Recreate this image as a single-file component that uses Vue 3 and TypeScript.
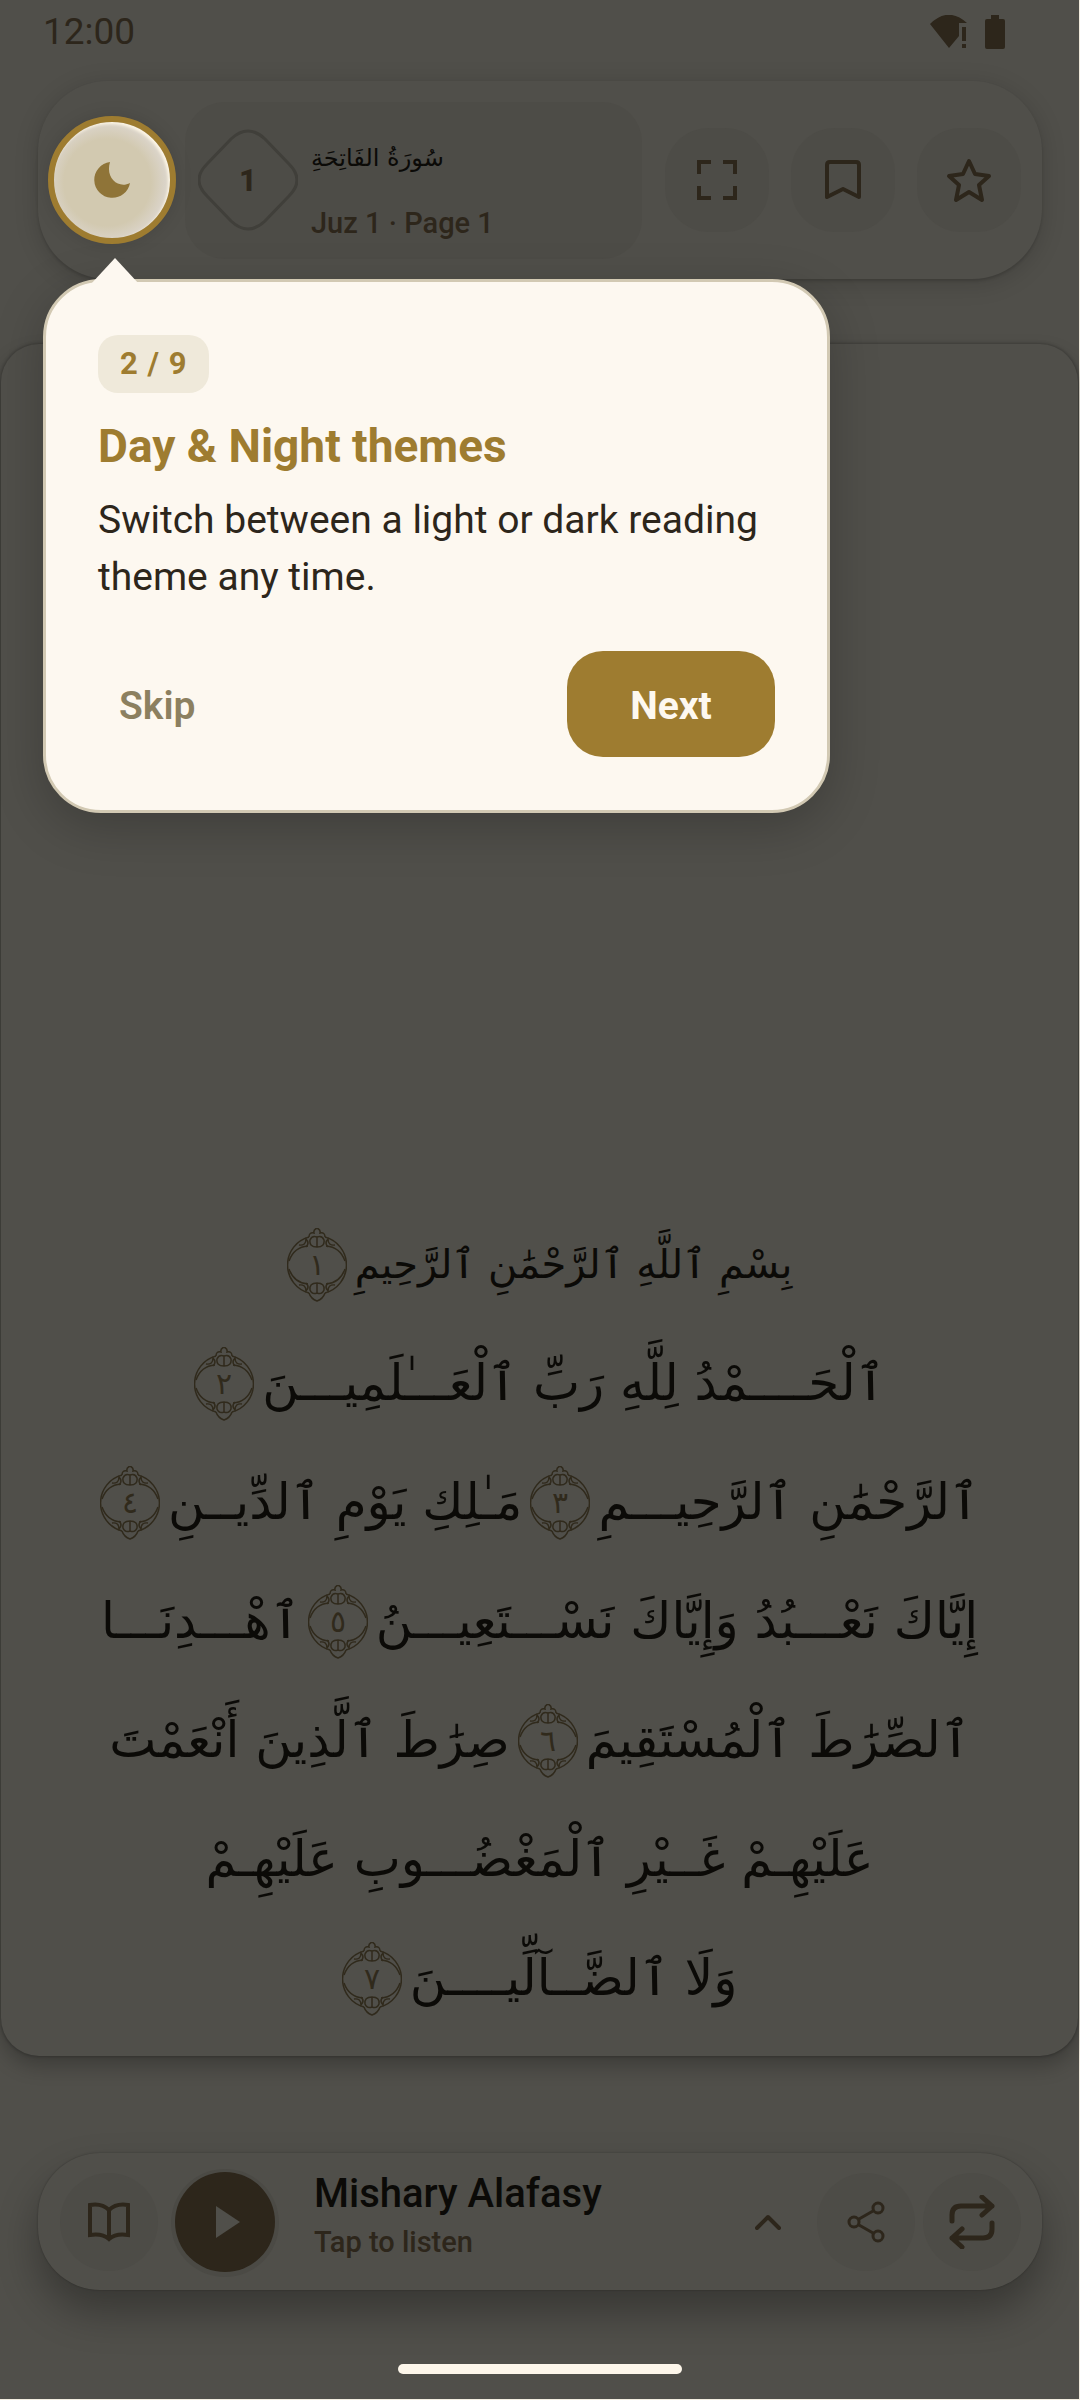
<script setup lang="ts">
import { ref } from 'vue'

interface Part {
  text?: string
  ayah?: string
}

const lines: Part[][] = [
  [{ text: 'بِسْمِ ٱللَّهِ ٱلرَّحْمَٰنِ ٱلرَّحِيمِ' }, { ayah: '١' }],
  [{ text: 'ٱلْحَــــمْدُ لِلَّهِ رَبِّ ٱلْعَـــٰلَمِيـــنَ' }, { ayah: '٢' }],
  [{ text: 'ٱلرَّحْمَٰنِ ٱلرَّحِيـــمِ' }, { ayah: '٣' }, { text: 'مَـٰلِكِ يَوْمِ ٱلدِّيــنِ' }, { ayah: '٤' }],
  [{ text: 'إِيَّاكَ نَعْـــبُدُ وَإِيَّاكَ نَسْـــتَعِيـــنُ' }, { ayah: '٥' }, { text: 'ٱهْـــدِنَـــا' }],
  [{ text: 'ٱلصِّرَٰطَ ٱلْمُسْتَقِيمَ' }, { ayah: '٦' }, { text: 'صِرَٰطَ ٱلَّذِينَ أَنْعَمْتَ' }],
  [{ text: 'عَلَيْهِـمْ غَــيْرِ ٱلْمَغْضُـــوبِ عَلَيْهِـمْ' }],
  [{ text: 'وَلَا ٱلضَّــآلِّيــــنَ' }, { ayah: '٧' }],
]

const step = ref(2)
const total = 9
const open = ref(true)
const next = () => {
  if (step.value < total) step.value++
  else open.value = false
}
</script>

<template>
  <div class="app">
    <div class="status">
      <span>12:00</span>
      <span class="status-icons">
        <svg width="38" height="34" viewBox="0 0 38 34" aria-hidden="true">
          <path d="M0 9Q18-9 37 8H29V21L19 33Z" fill="currentColor" />
          <path d="M32 12h4v14h-4zM32 29h4v4h-4z" fill="currentColor" />
        </svg>
        <svg width="20" height="34" viewBox="0 0 20 34" aria-hidden="true">
          <path d="M6 0h8v4h4q2 0 2 2v26q0 2-2 2H2q-2 0-2-2V6q0-2 2-2h4z" fill="currentColor" />
        </svg>
      </span>
    </div>

    <header class="toolbar">
      <div class="spotlight">
        <button class="theme" aria-label="Theme">
          <svg width="36" height="36" viewBox="0 0 36 36"><path d="M16 0A18 18 0 1 0 36 21C25 27 11 17 16 0Z" fill="#8f7438" /></svg>
        </button>
        <section v-if="open" class="tip" role="dialog" aria-labelledby="tip-title">
          <span class="count">{{ step }} / {{ total }}</span>
          <h2 id="tip-title">Day &amp; Night themes</h2>
          <p>Switch between a light or dark reading theme any time.</p>
          <div class="tip-actions">
            <button class="skip" @click="open = false">Skip</button>
            <button class="next" @click="next">Next</button>
          </div>
        </section>
      </div>
      <button class="surah">
        <span class="number">
          <svg width="100" height="102" viewBox="0 0 100 102" aria-hidden="true">
            <path d="M33 10Q50-6 67 10L91 35Q107 51 91 67L67 92Q50 108 33 92L9 67Q-7 51 9 35Z" fill="none" stroke="#403f3a" stroke-width="3" />
          </svg>
          <b>1</b>
        </span>
        <span class="surah-text">
          <span class="surah-name" lang="ar" dir="rtl">سُورَةُ الفَاتِحَةِ</span>
          <span class="surah-meta">Juz 1 · Page 1</span>
        </span>
      </button>
      <div class="tools">
        <button class="tool" aria-label="Full screen">
          <svg width="40" height="40" viewBox="0 0 40 40"><path d="M2 14V2h12M26 2h12v12M38 26v12H26M14 38H2V26" fill="none" stroke="currentColor" stroke-width="4" /></svg>
        </button>
        <button class="tool" aria-label="Bookmark">
          <svg width="36" height="40" viewBox="0 0 36 40"><path d="M2 37V5q0-3 3-3h26q3 0 3 3v32L18 29Z" fill="none" stroke="currentColor" stroke-width="4" stroke-linejoin="round" /></svg>
        </button>
        <button class="tool" aria-label="Favourite">
          <svg width="46" height="46" viewBox="0 0 46 46"><path d="M23 4l6 13 14 2-10 9 3 15-13-8-13 8 3-15L3 19l14-2z" fill="none" stroke="currentColor" stroke-width="4" stroke-linejoin="round" /></svg>
        </button>
      </div>
    </header>

    <main class="page" lang="ar" dir="rtl">
      <div v-for="(line, i) in lines" :key="i" class="line" :class="{ opening: i === 0 }">
        <template v-for="(part, j) in line" :key="j">
          <span v-if="part.text">{{ part.text }}</span>
          <svg v-else class="ayah" width="60" height="74" viewBox="0 0 60 74">
            <g fill="none" stroke="currentColor" stroke-width="1.5">
              <path d="M22 9A29 29 0 0 0 22 65M38 9A29 29 0 0 1 38 65" />
              <path d="M2 33Q7 19 21 18M39 18Q53 19 58 33M2 41Q7 55 21 56M39 56Q53 55 58 41" />
              <path d="M22 9Q22 4 27 5 26 2 30 0 34 2 33 5 38 4 38 9M30 9V19Q22 19 23 12 25 7 30 9 35 7 37 12 38 19 30 19M12 17Q19 18 19 11 23 15 19 19M48 17Q41 18 41 11 37 15 41 19" />
              <path d="M22 65Q24 71 30 73 36 71 38 65M30 65V55Q22 55 23 62 25 67 30 65 35 67 37 62 38 55 30 55M12 57Q19 56 19 63 23 59 19 55M48 57Q41 56 41 63 37 59 41 55" />
            </g>
            <text x="30" y="47" text-anchor="middle" fill="currentColor">{{ part.ayah }}</text>
          </svg>
        </template>
      </div>
    </main>

    <footer class="player">
      <button class="round" aria-label="Read">
        <svg width="42" height="40" viewBox="0 0 42 40"><path d="M2 3Q14 1 21 8 28 1 40 3V33Q28 31 21 37 14 31 2 33ZM21 8V37" fill="none" stroke="currentColor" stroke-width="4" /></svg>
      </button>
      <button class="play" aria-label="Play">
        <svg width="24" height="32" viewBox="0 0 24 32"><path d="M0 0L24 16 0 32Z" fill="#504f4a" /></svg>
      </button>
      <div class="reciter">
        <strong>Mishary Alafasy</strong>
        <span>Tap to listen</span>
      </div>
      <button class="expand" aria-label="Choose reciter">
        <svg width="26" height="16" viewBox="0 0 26 16"><path d="M2 14L13 3 24 14" fill="none" stroke="currentColor" stroke-width="4" stroke-linecap="round" stroke-linejoin="round" /></svg>
      </button>
      <button class="round" aria-label="Share">
        <svg width="38" height="42" viewBox="0 0 38 42"><g fill="none" stroke="currentColor" stroke-width="3"><circle cx="7" cy="21" r="5" /><circle cx="31" cy="7" r="5" /><circle cx="31" cy="35" r="5" /><path d="M12 18L26 10M12 24L26 32" /></g></svg>
      </button>
      <button class="round" aria-label="Repeat">
        <svg width="46" height="54" viewBox="0 0 46 54"><path d="M3 26V20Q3 11 12 11H43M33 2L43 11 33 20M43 28V34Q43 43 34 43H3M13 34L3 43 13 52" fill="none" stroke="currentColor" stroke-width="5" stroke-linecap="round" stroke-linejoin="round" /></svg>
      </button>
    </footer>

    <div class="home"></div>
  </div>
</template>

<style>
body {
  background: #f3eddf;
}
</style>

<style scoped>
.app {
  --ink: #2d261b;
  --bg: #504f4a;
  --soft: #4d4c47;
  --gold: #9e7c30;
  --cream: #fdf8f0;
  box-sizing: border-box;
  min-height: calc(100vh - 1px);
  margin-right: 1px;
  padding-bottom: 25px;
  display: flex;
  flex-direction: column;
  background: var(--bg);
  color: var(--ink);
  font-family: Roboto, "Noto Sans", sans-serif;
}
button {
  margin: 0;
  padding: 0;
  border: 0;
  background: none;
  color: inherit;
  font: inherit;
  display: flex;
  align-items: center;
  justify-content: center;
}
svg {
  display: block;
  flex: none;
}
.status {
  height: 81px;
  padding: 0 74px 18px 43px;
  box-sizing: border-box;
  display: flex;
  align-items: center;
  justify-content: space-between;
  font-size: 37px;
}
.status-icons {
  display: flex;
  gap: 17px;
}
.toolbar {
  margin: 0 37px 0 38px;
  height: 198px;
  padding: 0 21px 0 10px;
  box-sizing: border-box;
  display: flex;
  align-items: center;
  border-radius: 70px;
  box-shadow: 0 2px 3px rgba(0, 0, 0, 0.15), 0 4px 24px rgba(0, 0, 0, 0.16);
}
.spotlight {
  position: relative;
  z-index: 2;
}
.theme {
  width: 128px;
  height: 128px;
  box-sizing: border-box;
  border: 6px solid var(--gold);
  border-radius: 50%;
  background: radial-gradient(circle at 46% 52%, #d2c9b0 50%, #dad3c7 66%);
  box-shadow: inset -2px 2px 3px #fdf6e6, 0 0 18px rgba(0, 0, 0, 0.12);
}
.tip {
  position: absolute;
  top: 163px;
  left: -5px;
  width: 787px;
  box-sizing: border-box;
  padding: 53px 52px;
  border: 3px solid #d2c9b3;
  border-radius: 58px;
  background: var(--cream);
  box-shadow: 0 14px 50px rgba(0, 0, 0, 0.22);
}
.tip::before {
  content: "";
  position: absolute;
  left: 45px;
  top: -24px;
  width: 48px;
  height: 26px;
  background: var(--cream);
  clip-path: polygon(50% 0, 100% 100%, 0 100%);
}
.count {
  display: inline-block;
  padding: 0 22px;
  border-radius: 20px;
  background: #efe9da;
  color: var(--gold);
  font-size: 31px;
  line-height: 58px;
  font-weight: 700;
  letter-spacing: 1px;
}
.tip h2 {
  margin: 26px 0 0;
  color: var(--gold);
  font-size: 46px;
  line-height: 54px;
  font-weight: 700;
}
.tip p {
  margin: 19px 0 0;
  font-size: 39px;
  line-height: 57px;
}
.tip-actions {
  margin-top: 45px;
  display: flex;
  justify-content: space-between;
  font-size: 39px;
}
.skip,
.next {
  padding: 4px 21px 0;
}
.skip {
  color: #8c8060;
  font-weight: 600;
}
.next {
  width: 208px;
  height: 106px;
  box-sizing: border-box;
  border-radius: 36px;
  background: var(--gold);
  color: var(--cream);
  font-weight: 700;
}
.surah {
  flex: 1;
  min-width: 0;
  height: 157px;
  margin: 0 23px 0 9px;
  padding-left: 13px;
  justify-content: flex-start;
  border-radius: 40px;
  background: var(--soft);
}
.number {
  display: grid;
  place-items: center;
}
.number > * {
  grid-area: 1 / 1;
}
.number b {
  font-size: 31px;
  font-weight: 800;
}
.surah-text {
  margin-left: 13px;
  padding-top: 8px;
  display: flex;
  flex-direction: column;
  align-items: flex-start;
  gap: 12px;
}
.surah-name {
  color: #0b0a07;
  font-family: "DejaVu Sans", sans-serif;
  font-size: 24px;
  line-height: 66px;
}
.surah-meta {
  font-size: 29px;
  line-height: 40px;
  font-weight: 500;
}
.tools {
  display: flex;
  gap: 22px;
}
.tool {
  width: 104px;
  height: 104px;
  border-radius: 44px;
  background: var(--soft);
}
.page {
  flex: 1;
  margin: 65px 1px 97px;
  padding-bottom: 18px;
  display: flex;
  flex-direction: column;
  justify-content: flex-end;
  border-radius: 38px;
  color: #0b0a07;
  font-family: "DejaVu Sans", sans-serif;
  box-shadow: 0 0 3px 1px rgba(0, 0, 0, 0.22), 0 10px 20px rgba(0, 0, 0, 0.24);
}
.line {
  height: 119px;
  display: flex;
  align-items: center;
  justify-content: center;
  gap: 8px;
  font-size: 50px;
  line-height: 119px;
  white-space: nowrap;
}
.line.opening {
  font-size: 40px;
}
.ayah {
  color: #302a1c;
}
.ayah text {
  font-size: 30px;
}
.player {
  margin: 0 37px 74px 38px;
  height: 137px;
  padding: 0 21px 0 22px;
  box-sizing: border-box;
  display: flex;
  align-items: center;
  border-radius: 62px;
  background: var(--bg);
  box-shadow: 0 0 2px rgba(0, 0, 0, 0.3), 0 22px 40px rgba(0, 0, 0, 0.3);
}
.round {
  width: 98px;
  height: 98px;
  border-radius: 50%;
  background: var(--soft);
}
.play {
  width: 100px;
  height: 100px;
  margin-left: 17px;
  padding-left: 6px;
  border-radius: 50%;
  background: var(--ink);
  box-shadow: 0 1px 0 4px #4b4a45;
}
.reciter {
  flex: 1;
  margin-left: 39px;
  padding-bottom: 10px;
  display: flex;
  flex-direction: column;
}
.reciter strong {
  color: #0b0a07;
  font-size: 40px;
  line-height: 50px;
  font-weight: 500;
}
.reciter span {
  font-size: 29px;
  line-height: 46px;
  font-weight: 500;
}
.expand {
  width: 98px;
  height: 98px;
}
.expand + .round {
  margin-right: 8px;
}
.home {
  align-self: center;
  width: 284px;
  height: 10px;
  border-radius: 5px;
  background: #fdf6ea;
}
</style>
